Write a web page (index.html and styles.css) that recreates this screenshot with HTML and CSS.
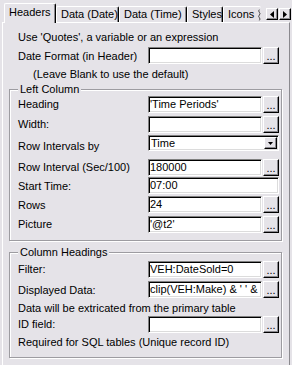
FILE: index.html
```html
<!DOCTYPE html>
<html lang="en">
<head>
    <meta charset="UTF-8" />
    <title>Report Properties</title>
    <link rel="stylesheet" href="styles.css">
</head>
<body>
    <div class="tabs">
        <div class="tab active t-headers">Headers</div>
        <div class="tab t-date">Data (Date)</div>
        <div class="tab t-time">Data (Time)</div>
        <div class="tab t-styles">Styles</div>
        <div class="tab cut">Icons<svg class="wave" width="4" height="16" viewBox="0 0 4 16"><path d="M2 0 q-2 2 0 4 t0 4 t0 4 t0 4" fill="none" stroke="#000" stroke-width="1"/></svg></div>
        <div class="spin">
            <span class="raised"><svg width="4" height="7" viewBox="0 0 4 7"><polygon points="4,0 0,3.5 4,7" fill="#000"/></svg></span>
            <span class="raised"><svg width="4" height="7" viewBox="0 0 4 7"><polygon points="0,0 4,3.5 0,7" fill="#000"/></svg></span>
        </div>
    </div>

    <div class="panel">
        <div class="note">Use 'Quotes', a variable or an expression</div>
        <div class="row short">
            <span class="label">Date Format (in Header)</span>
            <span class="field"></span>
            <span class="btn raised">...</span>
        </div>
        <div class="note indent tall">(Leave Blank to use the default)</div>

        <div class="group first">
            <span class="legend">Left Column</span>
            <div class="row">
                <span class="label">Heading</span>
                <span class="field">'Time Periods'</span>
                <span class="btn raised">...</span>
            </div>
            <div class="row">
                <span class="label">Width:</span>
                <span class="field"></span>
                <span class="btn raised">...</span>
            </div>
            <div class="row combo">
                <span class="label">Row Intervals by</span>
                <span class="select">
                    <span class="value">Time</span>
                    <span class="arrow raised"><svg width="5" height="3" viewBox="0 0 5 3"><polygon points="0,0 5,0 2.5,3" fill="#000"/></svg></span>
                </span>
            </div>
            <div class="row r18">
                <span class="label">Row Interval (Sec/100)</span>
                <span class="field">180000</span>
                <span class="btn raised">...</span>
            </div>
            <div class="row r19">
                <span class="label">Start Time:</span>
                <span class="field wide">07:00</span>
            </div>
            <div class="row r19">
                <span class="label">Rows</span>
                <span class="field">24</span>
                <span class="btn raised">...</span>
            </div>
            <div class="row">
                <span class="label">Picture</span>
                <span class="field">'@t2'</span>
                <span class="btn raised">...</span>
            </div>
        </div>

        <div class="group second">
            <span class="legend">Column Headings</span>
            <div class="row">
                <span class="label">Filter:</span>
                <span class="field">VEH:DateSold=0</span>
                <span class="btn raised">...</span>
            </div>
            <div class="row r21">
                <span class="label">Displayed Data:</span>
                <span class="field">clip(VEH:Make) &amp; ' ' &amp;</span>
                <span class="btn raised">...</span>
            </div>
            <div class="line">Data will be extricated from the primary table</div>
            <div class="row r16">
                <span class="label">ID field:</span>
                <span class="field"></span>
                <span class="btn raised">...</span>
            </div>
            <div class="line tail">Required for SQL tables (Unique record ID)</div>
        </div>
    </div>
</body>
</html>
```

FILE: styles.css
```css
body {
    margin: 0;
    width: 292px;
    background: #e5e3e8;
    color: #000;
    font-family: "Liberation Sans", Arial, sans-serif;
    font-size: 11px;
}
.raised {
    box-sizing: border-box;
    background: #e5e3e8;
    border: 1px solid;
    border-color: #fff #000 #000 #fff;
    box-shadow: inset -1px -1px #8a898e;
}

/* tab strip */
.tabs {
    display: flex;
    align-items: flex-end;
    height: 22px;
    padding-left: 4px;
}
.tab {
    box-sizing: border-box;
    height: 16px;
    line-height: 15px;
    padding-left: 4px;
    border-top: 1px solid #fff;
    border-left: 1px solid #fff;
    border-right: 1px solid #000;
    border-radius: 2px 2px 0 0;
    box-shadow: inset -1px 0 #8a898e;
    white-space: nowrap;
    overflow: hidden;
}
.tab.active {
    position: relative;
    z-index: 1;
    height: 20px;
    line-height: 17px;
    margin-bottom: -1px;
    background: #e5e3e8;
}
.t-headers { width: 52px; }
.t-date { width: 63px; }
.t-time { width: 68px; }
.t-styles { width: 36px; }
.tab.cut {
    display: flex;
    align-items: center;
    width: 38px;
    padding-right: 0;
    border-right: none;
    box-shadow: none;
}
.wave {
    margin-left: 4px;
}
.spin {
    display: flex;
    gap: 1px;
    align-self: flex-start;
    margin: 8px 1px 0 auto;
}
.spin span {
    width: 12px;
    height: 12px;
    display: flex;
    align-items: center;
    justify-content: center;
}

/* page */
.panel {
    box-sizing: border-box;
    width: 288px;
    min-height: 343px;
    margin-left: 2px;
    padding-top: 5px;
    border-top: 1px solid #fff;
    border-left: 1px solid #fff;
    border-right: 1px solid #8a898e;
}
.note {
    height: 19px;
    line-height: 19px;
    padding-left: 15px;
}
.note.indent {
    padding-left: 30px;
}
.note.tall {
    height: 21px;
    line-height: 21px;
}
.row {
    display: flex;
    align-items: center;
    height: 20px;
}
.panel > .row {
    padding-left: 15px;
}
.row.short { height: 17px; }
.row.r16 { height: 16px; }
.row.r18 { height: 18px; }
.row.r19 { height: 19px; }
.row.r21 { height: 21px; }
.row.combo {
    height: 24px;
    align-items: flex-start;
}
.label {
    width: 130px;
    flex-shrink: 0;
    white-space: nowrap;
}
.combo .label {
    line-height: 24px;
}
.field {
    box-sizing: border-box;
    width: 114px;
    height: 17px;
    line-height: 15px;
    padding-left: 1px;
    background: #fff;
    border: 1px solid;
    border-color: #808080 #fff #fff #808080;
    box-shadow: inset 1px 1px #000, inset -1px -1px #dcdcdc;
    overflow: hidden;
    white-space: nowrap;
}
.field.wide {
    width: 131px;
}
.btn {
    width: 16px;
    height: 17px;
    margin-left: 1px;
    display: flex;
    align-items: flex-end;
    justify-content: center;
    line-height: 13px;
}
.select {
    box-sizing: border-box;
    display: flex;
    width: 131px;
    height: 16px;
    margin-top: 1px;
    padding: 1px 1px 1px 2px;
    background: #fff;
    border: 1px solid;
    border-color: #808080 #fff #fff #808080;
    box-shadow: inset 1px 1px #000, inset -1px -1px #dcdcdc;
}
.select .value {
    flex: 1;
    line-height: 12px;
}
.arrow {
    width: 13px;
    display: flex;
    align-items: center;
    justify-content: center;
}

/* group boxes */
.group {
    position: relative;
    width: 273px;
    box-sizing: border-box;
    margin-left: 6px;
    padding-left: 8px;
    border: 1px solid #9d9ca1;
    box-shadow: inset 1px 1px #fff, 1px 1px #fff;
}
.group.first {
    margin-top: 4px;
    padding-top: 4px;
    padding-bottom: 6px;
}
.group.second {
    margin-top: 11px;
    padding-top: 6px;
    padding-bottom: 5px;
}
.legend {
    position: absolute;
    top: -7px;
    left: 8px;
    padding: 0 2px;
    line-height: 13px;
    background: #e5e3e8;
}
.line {
    height: 16px;
    line-height: 16px;
    white-space: nowrap;
}
.line.tail {
    height: 20px;
    line-height: 20px;
}
```
